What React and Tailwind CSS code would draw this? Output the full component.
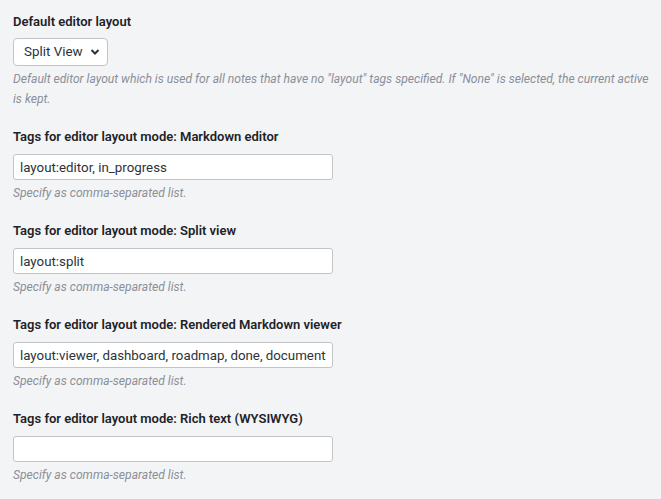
import React from 'react';

const tagFields = [
  { label: 'Tags for editor layout mode: Markdown editor', value: 'layout:editor, in_progress' },
  { label: 'Tags for editor layout mode: Split view', value: 'layout:split' },
  { label: 'Tags for editor layout mode: Rendered Markdown viewer', value: 'layout:viewer, dashboard, roadmap, done, document' },
  { label: 'Tags for editor layout mode: Rich text (WYSIWYG)', value: '' },
];

const Help = ({ children }) => (
  <p className="mt-[3px] text-[12.1px] leading-[20px] italic text-[#8a8f99]">{children}</p>
);

const App = () => {
  return (
    <div className="min-h-[499px] w-[661px] bg-[#f3f4f6] px-[13px] pt-[12px] font-['Roboto',sans-serif] text-[#2c3338]">
      <div className="w-[636px]">
        <label className="block text-[13px] leading-[20px] font-semibold text-[#1d2327]">Default editor layout</label>
        <div className="relative mt-[6px] w-[95px]">
          <select
            defaultValue="split"
            className="h-[28px] w-[95px] appearance-none rounded-[4px] border border-[#c3c4c7] bg-white pl-[10px] text-[13.4px] text-[#2c3338] outline-none"
          >
            <option value="none">None</option>
            <option value="editor">Editor</option>
            <option value="split">Split View</option>
            <option value="viewer">Viewer</option>
          </select>
          <svg className="pointer-events-none absolute right-[8px] top-[10px]" width="10" height="8" viewBox="0 0 10 8">
            <path d="M1.5 2 L5 5.5 L8.5 2" fill="none" stroke="#2c3338" strokeWidth="2" />
          </svg>
        </div>
        <Help>
          Default editor layout which is used for all notes that have no "layout" tags specified. If "None" is selected, the current active is kept.
        </Help>

        {tagFields.map((f) => (
          <div key={f.label} className="mt-[18px]">
            <label className="block text-[13px] leading-[20px] font-semibold text-[#1d2327]">{f.label}</label>
            <input
              type="text"
              defaultValue={f.value}
              className="mt-[7px] block h-[26px] w-[320px] rounded-[3px] border border-[#c3c4c7] bg-white pl-[6px] pr-[2px] text-[13.3px] text-[#2c3338] outline-none"
            />
            <Help>Specify as comma-separated list.</Help>
          </div>
        ))}
      </div>
    </div>
  );
};

export default App;
